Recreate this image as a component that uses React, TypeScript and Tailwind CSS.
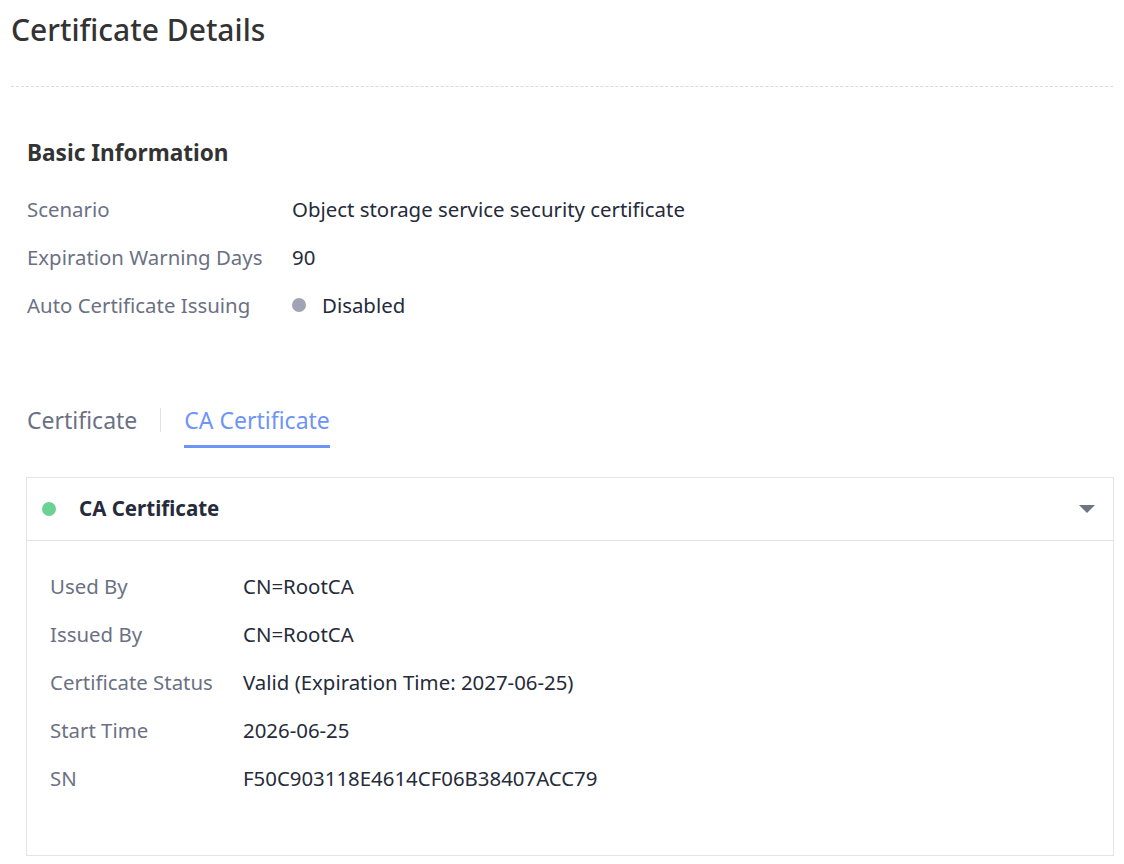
const basicRows = [
  { label: "Scenario", value: "Object storage service security certificate" },
  { label: "Expiration Warning Days", value: "90" },
];

const caRows = [
  { label: "Used By", value: "CN=RootCA" },
  { label: "Issued By", value: "CN=RootCA" },
  { label: "Certificate Status", value: "Valid (Expiration Time: 2027-06-25)" },
  { label: "Start Time", value: "2026-06-25" },
  { label: "SN", value: "F50C903118E4614CF06B38407ACC79" },
];

export default function App() {
  return (
    <div
      className="min-h-screen w-[1124px] bg-white text-[#252b3a]"
      style={{ fontFamily: '"Noto Sans", "Open Sans", sans-serif' }}
    >
      <div className="px-[11px] pt-[10px]">
        <h1 className="text-[30px] leading-[40px] font-medium text-[#333]">Certificate Details</h1>
        <div className="mt-[36px] border-t border-dashed border-[#d9d9ec]" />
      </div>

      <div className="px-[27px]">
        <h2 className="mt-[51px] text-[22.6px] leading-[30px] font-bold text-[#333]">Basic Information</h2>

        <div className="mt-[26px] flex flex-col gap-[18px] text-[20.4px] leading-[30px]">
          {basicRows.map((row) => (
            <div key={row.label} className="flex">
              <span className="w-[265px] shrink-0 text-[#6b7184]">{row.label}</span>
              <span>{row.value}</span>
            </div>
          ))}
          <div className="flex">
            <span className="w-[265px] shrink-0 text-[#6b7184]">Auto Certificate Issuing</span>
            <span className="flex items-center gap-[16px]">
              <span className="h-[14px] w-[14px] rounded-full bg-[#a0a4b4]" />
              Disabled
            </span>
          </div>
        </div>

        <div className="mt-[81px] flex items-center text-[23px]">
          <button type="button" className="pb-[10px] pt-[2px] text-[#6b7184]">Certificate</button>
          <span className="mx-[23px] mb-[8px] h-[24px] w-px bg-[#dfe1e6]" />
          <button
            type="button"
            className="border-b-[3px] border-[#6e95f5] pb-[7px] pt-[2px] text-[#6e95f5]"
          >
            CA Certificate
          </button>
        </div>

        <div className="-ml-px -mr-[17px] mt-[29px] border border-[#e2e4e8]">
          <div className="flex h-[63px] items-center border-b border-[#e2e4e8] pl-[15px] pr-[18px]">
            <span className="h-[14px] w-[14px] rounded-full bg-[#6bd294]" />
            <span className="ml-[23px] text-[20.5px] font-bold text-[#252b3a]">CA Certificate</span>
            <svg className="ml-auto" width="16" height="10" viewBox="0 0 16 10">
              <path d="M0 1 H16 L8 9 Z" fill="#707586" />
            </svg>
          </div>
          <div className="flex flex-col gap-[18px] px-[23px] pt-[30px] pb-[62px] text-[20.4px] leading-[30px]">
            {caRows.map((row) => (
              <div key={row.label} className="flex">
                <span className="w-[193px] shrink-0 text-[#6b7184]">{row.label}</span>
                <span>{row.value}</span>
              </div>
            ))}
          </div>
        </div>
      </div>
    </div>
  );
}
